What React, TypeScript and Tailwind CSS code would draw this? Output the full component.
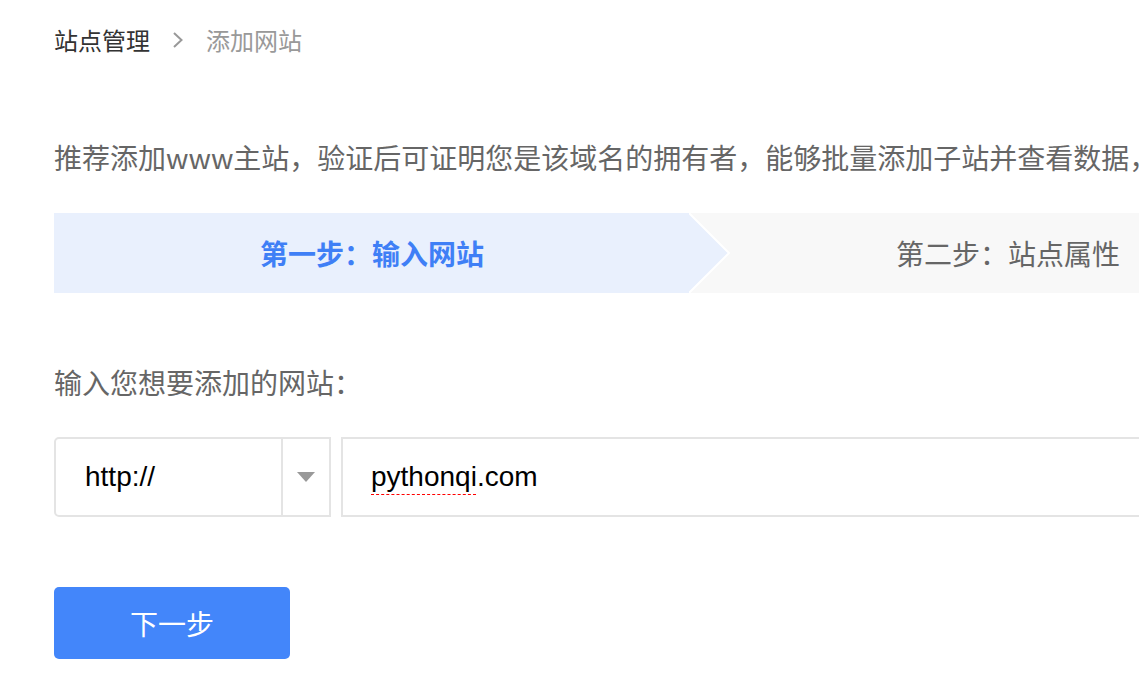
export default function App() {
  const cjk = { fontFamily: '"Noto Sans CJK SC", "Microsoft YaHei", sans-serif' };

  return (
    <div className="h-screen w-full overflow-hidden bg-white pl-[54px]" style={cjk}>
      {/* breadcrumb */}
      <div className="mt-[24px] flex h-[32px] items-center text-[24px] leading-[32px]">
        <span className="text-[#333]">站点管理</span>
        <svg className="ml-[22px] mr-[22px]" width="12" height="18" viewBox="0 0 12 18" fill="none">
          <path d="M2 2 L9.5 9 L2 16" stroke="#999" strokeWidth="2" />
        </svg>
        <span className="text-[#999]">添加网站</span>
      </div>

      <p className="mt-[81px] whitespace-nowrap text-[28px] leading-[40px] text-[#666]">
        推荐添加www主站，验证后可证明您是该域名的拥有者，能够批量添加子站并查看数据，
      </p>

      {/* steps */}
      <div className="mt-[36px] flex h-[80px] w-[1272px] shrink-0 bg-[#f8f8f8]">
        <div className="relative flex w-[636px] shrink-0 items-center justify-center bg-[#e9f0fd]">
          <span className="relative z-10 text-[28px] font-bold text-[#3f7ff6]">第一步：输入网站</span>
          <svg className="absolute top-0 right-[-41px] z-0" width="42" height="80" viewBox="0 0 42 80">
            <polygon points="0,0 40,40 0,80" fill="#e9f0fd" />
            <polyline points="0,0 40,40 0,80" fill="none" stroke="#ffffff" strokeWidth="2" />
          </svg>
        </div>
        <div className="flex w-[636px] shrink-0 items-center justify-center">
          <span className="text-[28px] text-[#666]">第二步：站点属性</span>
        </div>
      </div>

      <p className="mt-[69px] text-[28px] leading-[40px] text-[#666]">输入您想要添加的网站：</p>

      {/* url input */}
      <div
        className="mt-[35px] flex h-[80px] w-[1272px] gap-[10px]"
        style={{ fontFamily: '"Liberation Sans", Arial, sans-serif' }}
      >
        <div className="flex w-[277px] shrink-0 rounded-l-[5px] border-2 border-[#e4e4e4]">
          <div className="flex flex-1 items-center pl-[29px] text-[28px] text-black">http://</div>
          <div className="flex w-[48px] shrink-0 items-center justify-center border-l-2 border-[#e4e4e4]">
            <svg width="18" height="11" viewBox="0 0 18 11">
              <polygon points="0,0 18,0 9,10" fill="#999" />
            </svg>
          </div>
        </div>
        <div className="flex w-[985px] shrink-0 items-center border-2 border-[#e4e4e4] pl-[28px] text-[28px] text-black">
          <span className="underline decoration-[#f00] decoration-dashed decoration-1 underline-offset-[8px]">pythonqi</span>
          <span>.com</span>
        </div>
      </div>

      <button className="mt-[70px] flex h-[72px] w-[236px] items-center justify-center rounded-[5px] bg-[#4386fa] text-[28px] text-white">
        下一步
      </button>
    </div>
  );
}
